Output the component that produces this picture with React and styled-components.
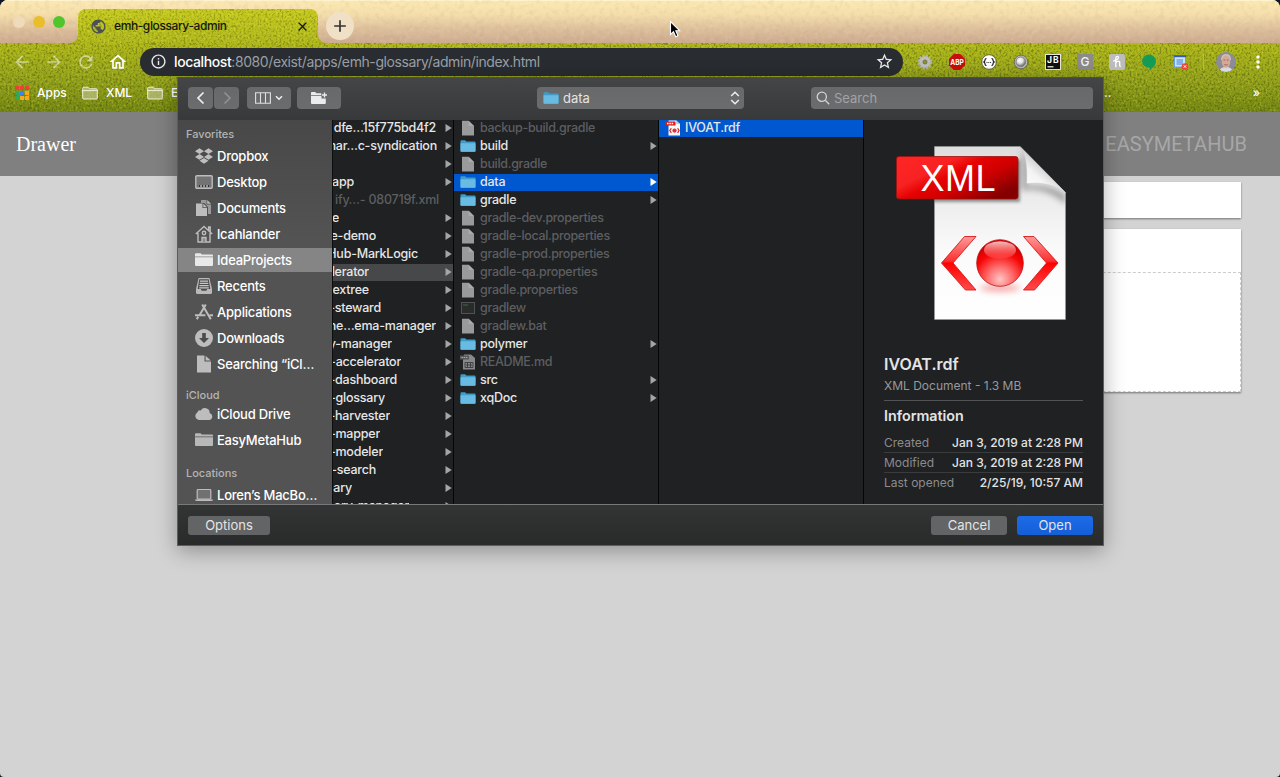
import React from "react";
import styled, { createGlobalStyle, css } from "styled-components";
import {
  MdPublic, MdClose, MdAdd, MdArrowBack, MdArrowForward, MdRefresh, MdOutlineHome,
  MdInfoOutline, MdStarBorder, MdMoreVert,
} from "react-icons/md";
import { FaDropbox } from "react-icons/fa";

const Global = createGlobalStyle`
  * { box-sizing: border-box; }
  body { margin: 0; background: #0d1526; overflow: hidden; }
  svg { display: block; flex: none; }
`;

const ui = `"Inter", "Liberation Sans", sans-serif`;

const Window = styled.div`
  position: relative;
  width: 1280px;
  height: 777px;
  border-radius: 8px 8px 4px 4px;
  overflow: hidden;
  background: #d3d3d3;
  font-family: ${ui};
`;

/* ---------- textured theme ---------- */
const GrainSvg = styled.svg`
  position: absolute;
  inset: 0;
  width: 100%;
  height: 100%;
  pointer-events: none;
`;

function Grain({ id, freq, dark, light, darkColor = "#3a4400", lightColor = "#e6ea48" }) {
  return (
    <GrainSvg aria-hidden="true">
      <filter id={id + "d"} x="0" y="0" width="100%" height="100%">
        <feTurbulence type="fractalNoise" baseFrequency={freq} numOctaves="2" seed="4" />
        <feColorMatrix values="0 0 0 0 0  0 0 0 0 0  0 0 0 0 0  4 0 0 0 -1.9" result="n" />
        <feFlood floodColor={darkColor} />
        <feComposite in2="n" operator="in" />
      </filter>
      <filter id={id + "l"} x="0" y="0" width="100%" height="100%">
        <feTurbulence type="fractalNoise" baseFrequency={freq} numOctaves="2" seed="11" />
        <feColorMatrix values="0 0 0 0 0  0 0 0 0 0  0 0 0 0 0  0 4 0 0 -2" result="n" />
        <feFlood floodColor={lightColor} />
        <feComposite in2="n" operator="in" />
      </filter>
      <rect width="100%" height="100%" filter={`url(#${id}d)`} opacity={dark} />
      <rect width="100%" height="100%" filter={`url(#${id}l)`} opacity={light} />
    </GrainSvg>
  );
}

const TabStrip = styled.div`
  position: relative;
  display: flex;
  height: 43px;
  padding-left: 13px;
  background: linear-gradient(#fbe9b3 0, #f5dfac 14px, #ddc09c 29px, #ccab90 43px);
  box-shadow: inset 0 1px 0 #fff3d0;
`;
const Lights = styled.div`
  display: flex;
  gap: 8px;
  width: 65px;
  padding-top: 16px;
  z-index: 1;
`;
const Light = styled.i`
  width: 12px;
  height: 12px;
  border-radius: 50%;
  background: ${(p) => p.$c};
`;
const Tab = styled.div`
  position: relative;
  display: flex;
  align-items: center;
  width: 240px;
  height: 34px;
  margin-top: 9px;
  padding: 0 8px 0 12px;
  border-radius: 8px 8px 0 0;
  background: linear-gradient(#c8cb20, #b0b81c);
  font-size: 12px;
  color: #15170a;
  &::before, &::after {
    content: "";
    position: absolute;
    bottom: 0;
    width: 8px;
    height: 8px;
  }
  &::before { left: -8px; background: radial-gradient(circle at 0 0, transparent 7.5px, #a9b01c 8px); }
  &::after { right: -8px; background: radial-gradient(circle at 100% 0, transparent 7.5px, #a9b01c 8px); }
`;
const TabClip = styled.div`
  position: absolute;
  inset: 0;
  border-radius: 8px 8px 0 0;
  overflow: hidden;
`;
const TabTitle = styled.span`
  position: relative;
  flex: 1;
  margin: 0 0 1px 7px;
  font-weight: 450;
  letter-spacing: -0.4px;
`;
const Above = styled.span`
  position: relative;
  display: flex;
`;
const NewTab = styled.div`
  position: relative;
  display: flex;
  align-items: center;
  justify-content: center;
  width: 28px;
  height: 28px;
  margin: 12px 0 0 8px;
  border-radius: 50%;
  background: #f0e0c6;
  color: #333;
`;

const Chrome = styled.div`
  position: relative;
  height: 69px;
  background: linear-gradient(#b0b81a, #92a11c 38px, #748713 69px);
`;
const ToolRow = styled.div`
  position: relative;
  display: flex;
  align-items: center;
  height: 37px;
  padding-left: 12px;
  color: #fff;
`;
const NavIcons = styled.div`
  display: flex;
  gap: 12px;
  width: 128px;
  & > svg:nth-child(-n + 3) { opacity: 0.5; }
`;
const Omnibox = styled.div`
  display: flex;
  align-items: center;
  width: 763px;
  height: 28px;
  padding: 0 9px 0 10px;
  border-radius: 14px;
  background: #292c30;
  color: #e8eaed;
  font-size: 14px;
`;
const Url = styled.span`
  flex: 1;
  margin-left: 7px;
  padding-bottom: 1px;
  color: #9aa0a6;
  letter-spacing: -0.4px;
  b { font-weight: 500; color: #fff; }
`;
const Extensions = styled.div`
  display: flex;
  align-items: center;
  gap: 12px;
  margin-left: 12px;
  & > svg { width: 20px; height: 20px; }
`;
const Divider = styled.div`
  width: 1px;
  height: 16px;
  margin: 0 12px 0 12px;
  background: #b3b95c;
`;
const BookmarkRow = styled.div`
  position: relative;
  display: flex;
  align-items: center;
  height: 26px;
  padding: 0 20px 1px 15px;
  color: #fff;
  font-size: 12px;
  font-weight: 450;
`;
const Bookmark = styled.div`
  display: flex;
  align-items: center;
  gap: 8px;
  width: ${(p) => p.$w}px;
`;
const Spread = styled.span`
  flex: 1;
`;
const AppGrid = styled.div`
  display: grid;
  grid-template-columns: repeat(3, 4px);
  gap: 1px;
  i { height: 4px; }
`;
const GridDot = styled.i`
  background: ${(p) => p.$c};
`;

/* ---------- page behind the dialog ---------- */
const PageHeader = styled.div`
  display: flex;
  align-items: center;
  justify-content: space-between;
  height: 64px;
  padding: 0 33px 0 16px;
  background: #808080;
`;
const DrawerTitle = styled.span`
  font: 20px "Liberation Serif", serif;
  color: #fff;
`;
const Brand = styled.span`
  font: 20px Roboto, sans-serif;
  letter-spacing: 0.05px;
  color: #a7a7a7;
`;
const Cards = styled.div`
  display: flex;
  flex-direction: column;
  gap: 11px;
  padding: 6px 39px 0 216px;
`;
const Card = styled.div`
  height: ${(p) => p.$h}px;
  background: #fff;
  box-shadow: 0 1px 2px rgba(0, 0, 0, 0.45);
  ${(p) => p.$dashed && css`
    padding-top: 43px;
    div { height: 120px; border: 1px dashed #ccc; border-left: 0; }
  `}
`;

/* ---------- file dialog ---------- */
const Dialog = styled.div`
  position: absolute;
  left: 177px;
  top: 77px;
  width: 927px;
  height: 469px;
  border: 1px solid #5b5d5f;
  border-top-color: #4b4d4f;
  background: #1f2123;
  color: #e4e4e4;
  font-size: 13px;
  box-shadow: 0 5px 20px rgba(0, 0, 0, 0.32);
`;
const Toolbar = styled.div`
  display: flex;
  height: 42px;
  padding: 9px 10px 0;
  background: linear-gradient(#434547, #37393b);
`;
const ToolButton = styled.div`
  display: flex;
  align-items: center;
  justify-content: center;
  gap: 4px;
  width: ${(p) => p.$w}px;
  height: 22px;
  margin-right: ${(p) => p.$gap || 1}px;
  border-radius: 4px;
  background: linear-gradient(#67696b, #6b6c6e);
`;
const Popup = styled(ToolButton)`
  justify-content: flex-start;
  gap: 4px;
  padding: 0 4px 0 6px;
  margin: 0 67px 0 195px;
  span { flex: 1; }
`;
const Search = styled(ToolButton)`
  justify-content: flex-start;
  padding-left: 5px;
  margin: 0;
  color: #a2a3a4;
`;
const Body = styled.div`
  display: flex;
  height: 384px;
  overflow: hidden;
`;
const Sidebar = styled.div`
  display: flex;
  flex-direction: column;
  width: 154px;
  background: linear-gradient(#484848, #535353 120px, #535353);
  overflow: hidden;
  font-weight: 500;
  color: #fff;
`;
const Section = styled.div`
  padding: ${(p) => p.$top}px 0 ${(p) => p.$bottom}px 8px;
  font-size: 11px;
  line-height: 12px;
  color: #b4b4b4;
`;
const Place = styled.div`
  display: flex;
  flex: none;
  align-items: center;
  gap: 4px;
  height: 24px;
  margin: 1px 0;
  padding-left: 17px;
  white-space: nowrap;
  letter-spacing: -0.22px;
  background: ${(p) => (p.$on ? "#858585" : "transparent")};
`;
const Column = styled.div`
  width: ${(p) => p.$w}px;
  border-right: 1px solid #050607;
  border-left: ${(p) => (p.$first ? "1px solid #0c0d0e" : "0")};
  overflow: hidden;
`;
const Row = styled.div`
  display: flex;
  align-items: center;
  height: 17px;
  margin-bottom: 1px;
  padding: 0 1px 1px ${(p) => (p.$pad === undefined ? 6 : p.$pad)}px;
  background: ${(p) => p.$bg || "transparent"};
  color: ${(p) => (p.$dim ? "#5d5e60" : "#e6e6e6")};
  font-weight: ${(p) => (p.$strong ? 500 : 450)};
  font-size: 12.5px;
  letter-spacing: ${(p) => (p.$strong ? "-0.25px" : "-0.32px")};
  white-space: nowrap;
  & > span { margin-left: 4px; line-height: 16px; padding-bottom: 1px; }
  & > svg:last-child { margin-left: auto; }
`;
const Clipped = styled.div`
  display: flex;
  justify-content: flex-end;
  width: ${(p) => p.$w}px;
  overflow: hidden;
  line-height: 16px;
  letter-spacing: -0.22px;
`;
const Preview = styled.div`
  flex: 1;
  padding: 18px 20px 0;
`;
const Art = styled.svg`
  width: 199px;
  height: 190px;
`;
const FileName = styled.div`
  margin-top: 26px;
  padding-bottom: 1px;
  font-size: 16px;
  font-weight: 600;
  line-height: 20px;
`;
const Kind = styled.div`
  padding: 3px 0 6px;
  border-bottom: 1px solid #515355;
  font-size: 12px;
  line-height: 16px;
  color: #98999b;
`;
const InfoTitle = styled.div`
  padding: 5px 0 7px;
  font-size: 14.3px;
  font-weight: 600;
  line-height: 20px;
`;
const Info = styled.div`
  display: flex;
  justify-content: space-between;
  height: 20px;
  font-size: 12px;
  font-weight: 450;
  line-height: 19px;
  border-bottom: 1px solid ${(p) => (p.$last ? "transparent" : "#3a3b3d")};
  span { color: #8b8c8e; font-weight: 400; }
`;
const Footer = styled.div`
  display: flex;
  gap: 10px;
  height: 41px;
  padding: 11px 10px 0;
  border-top: 1px solid #77797b;
  background: linear-gradient(#333434, #292a2a);
`;
const Button = styled.div`
  width: ${(p) => p.$w}px;
  height: 19px;
  border-radius: 3px;
  background: ${(p) => (p.$primary ? "linear-gradient(#1c6be8, #155fd6)" : "#636465")};
  text-align: center;
  line-height: 19px;
  ${(p) => p.$push && css`margin-right: auto;`}
`;
const Cursor = styled.svg`
  position: absolute;
  left: 669px;
  top: 20px;
`;

/* ---------- drawings ---------- */
const BlueFolder = () => (
  <svg width="16" height="14" viewBox="0 0 16 14">
    <path d="M.5 2.200q0-.9.9-.9h3.800l1.100 1.200h8.300q.9 0 .9.9V12q0 .8-.8.8H1.300q-.8 0-.8-.8z" fill="#3f9cc9" />
    <path d="M.5 4.200h15V12q0 .8-.8.8H1.300q-.8 0-.8-.8z" fill="#68bbe3" />
  </svg>
);
const GreyFolder = ({ c = "#b8b8b8" }) => (
  <svg width="18" height="16" viewBox="0 0 18 16">
    <path d="M0 2.300q0-1 1-1h4.600l1.200 1.300H17q1 0 1 1v.9H0z" fill={c} />
    <path d="M0 5.200h18V13q0 1-1 1H1q-1 0-1-1z" fill={c} />
  </svg>
);
const Page = () => (
  <svg width="16" height="16" viewBox="0 0 16 16">
    <path d="M2 .8h6.600L14 6v9.500H2z" fill="#999a9b" />
    <path d="M8.600.8V6H14z" fill="#aaabac" />
  </svg>
);
const Exec = () => (
  <svg width="16" height="16" viewBox="0 0 16 16">
    <rect x="1.500" y="2.500" width="13" height="11" fill="#292c2a" stroke="#4f5351" />
    <path d="M3 5h5" stroke="#3f6a45" />
  </svg>
);
const MdIcon = () => (
  <svg width="16" height="16" viewBox="0 0 16 16">
    <path d="M4 .5h7L15 4v11.500H3V6" fill="#88898a" />
    <path d="M0 1.500h9v4H0z" fill="#58595a" /><path d="M1.500 3.500h6" stroke="#aaa" strokeDasharray="1.500 .7" />
    <path d="M5 8.500h8v5H5zM7.500 9v4M10.500 9v4M6 11h6" fill="none" stroke="#414243" />
  </svg>
);
const SmallXml = () => (
  <svg width="16" height="16" viewBox="0 0 16 16">
    <path d="M3.500.5h7.800L15 4v11.500H3.500z" fill="#f6f6f6" />
    <path d="M11 .5V4h4z" fill="#c7cbd2" />
    <rect y="1.500" width="10.500" height="4" rx=".5" fill="#d81a1a" />
    <path d="M2 3.500h6.500" stroke="#fff" strokeWidth="1.400" strokeDasharray="1.600 .7" />
    <path d="M6.300 8.200 4.800 10.600l1.500 2.400M12.600 8.200l1.500 2.400-1.500 2.400" fill="none" stroke="#e02020" strokeWidth="1.200" />
    <circle cx="9.500" cy="10.600" r="2.100" fill="#e43030" />
  </svg>
);
const Arrow = ({ c = "#a4a5a6" }) => (
  <svg width="7" height="8" viewBox="0 0 7 8"><path d="M.5 0 6.700 4 .5 8z" fill={c} /></svg>
);
const BookmarkFolder = () => (
  <svg width="16" height="14" viewBox="0 0 16 14" fill="#b9bd7c" fillOpacity=".75" stroke="#eef0d8">
    <path d="M.7 2.200q0-1 1-1H6l1.300 1.600h7q1 0 1 1V12q0 1-1 1H1.700q-1 0-1-1z" /><path d="M.7 4.600h14.600" />
  </svg>
);

const placeIcons = {
  dropbox: <FaDropbox size={18} color="#bebebe" />,
  desktop: (
    <svg width="18" height="16" viewBox="0 0 18 16">
      <rect x=".8" y="1.800" width="16.400" height="12.400" rx="1" fill="#737373" stroke="#bdbdbd" strokeWidth="1.400" />
      <path d="M4 12h10" stroke="#333" strokeWidth="2" /><path d="M5.200 12h8" stroke="#d0d0d0" strokeWidth="1.500" strokeDasharray="1.700 1.300" />
    </svg>
  ),
  documents: (
    <svg width="18" height="18" viewBox="0 0 18 18">
      <path d="M6 1h5.500v4.500H16V15h-3V8L9.500 4H6z" fill="#9a9a9a" /><path d="M12.200 1 16 4.800h-3.800z" fill="#bbb" />
      <path d="M1 4.500h6.500V9H12v8H1z" fill="#bdbdbd" /><path d="M8.300 4.500 12 8.200H8.300z" fill="#bdbdbd" />
    </svg>
  ),
  home: (
    <svg width="18" height="18" viewBox="0 0 18 18" fill="none" stroke="#bdbdbd" strokeWidth="1.400">
      <path d="M.8 9 9 1.500 17.200 9M3 8v9h12V8M13.600 5.500V2h1.600v5" /><path d="M7 17v-4.500h4V17" fill="#8c8c8c" /><circle cx="9" cy="8" r="1.700" />
    </svg>
  ),
  folder: <GreyFolder />,
  folderOn: <GreyFolder c="#e9e9e9" />,
  recents: (
    <svg width="18" height="18" viewBox="0 0 18 18">
      <path d="M3.600 1h10.800l2.600 11v3.800q0 1.200-1.200 1.200H2.200Q1 17 1 15.800V12z" fill="#b9b9b9" />
      <path d="M4.300 2.300h9.400l1.600 9.700h-3l-1 1.800H6.700L5.700 12h-3z" fill="#4d4d4d" />
      <path d="M5 4.200h8M4.700 6.400h8.600M4.400 8.600h9.200M4.200 10.800h9.600" stroke="#c7c7c7" strokeWidth="1.200" />
    </svg>
  ),
  apps: (
    <svg width="18" height="18" viewBox="0 0 18 18" fill="none" stroke="#bdbdbd" strokeWidth="2">
      <path d="M10.800 1.500 4.800 11.800M7.200 1.500l8.600 14.800M0 12.200h10.400M14.600 12.200H18M3.200 13.800l-1.400 2.500" />
    </svg>
  ),
  downloads: (
    <svg width="18" height="18" viewBox="0 0 18 18">
      <circle cx="9" cy="9" r="9" fill="#bdbdbd" /><path d="M7.200 4h3.600v5H14l-5 5-5-5h3.200z" fill="#4c4c4c" />
    </svg>
  ),
  doc: (
    <svg width="18" height="18" viewBox="0 0 18 18">
      <path d="M2 .5h7.500v6H16v11H2z" fill="#bdbdbd" /><path d="M10.600.8 15.800 5.600h-5.200z" fill="#bdbdbd" />
    </svg>
  ),
  cloud: (
    <svg width="18" height="14" viewBox="0 0 18 14">
      <path d="M4 13a4 4 0 0 1-1.700-7.400 3 3 0 0 1 3.500-2.200A4.700 4.700 0 0 1 14.600 6 3.600 3.600 0 0 1 14.500 13z" fill="#bdbdbd" />
    </svg>
  ),
  laptop: (
    <svg width="18" height="14" viewBox="0 0 18 14">
      <rect x="2.200" y="1.500" width="13.600" height="9.600" rx=".8" fill="#717171" stroke="#bdbdbd" strokeWidth="1.200" />
      <path d="M0 11.500h18v.6q-.5.900-1.500.900h-15q-1 0-1.500-.9z" fill="#bdbdbd" />
    </svg>
  ),
};

const favorites = [
  ["dropbox", "Dropbox"], ["desktop", "Desktop"], ["documents", "Documents"], ["home", "lcahlander"],
  ["folderOn", "IdeaProjects", true], ["recents", "Recents"], ["apps", "Applications"],
  ["downloads", "Downloads"], ["doc", "Searching “iCl…"],
];

/* label and the x offset at which it ends; the column is scrolled sideways */
const projects = [
  ["dfe…15f775bd4f2", 103], ["mar…c-syndication", 104], ["", 20], ["app", 21],
  ["ify…- 080719f.xml", 106, "dim"], ["e", 6], ["e-demo", 43], ["Hub-MarkLogic", 85],
  ["lerator", 36, "on"], ["extree", 36], ["-steward", 48], ["he…ema-manager", 103],
  ["y-manager", 59], ["-accelerator", 68], ["-dashboard", 64], ["-glossary", 52],
  ["-harvester", 57], ["-mapper", 47], ["-modeler", 50], ["-search", 43], ["sary", 19],
  ["ery-manager", 76],
];

const files = [
  ["page", "backup-build.gradle"], ["folder", "build"], ["page", "build.gradle"], ["folder", "data", true],
  ["folder", "gradle"], ["page", "gradle-dev.properties"], ["page", "gradle-local.properties"],
  ["page", "gradle-prod.properties"], ["page", "gradle-qa.properties"], ["page", "gradle.properties"],
  ["exec", "gradlew"], ["page", "gradlew.bat"], ["folder", "polymer"], ["md", "README.md"],
  ["folder", "src"], ["folder", "xqDoc"],
];
const fileIcons = { page: <Page />, folder: <BlueFolder />, exec: <Exec />, md: <MdIcon /> };
const dots = ["#ea4335", "#ea4335", "#ea4335", "#34a853", "#3f83ee", "#fba71a", "#34a853", "#fba71a", "#fba71a"];

function Places({ items }) {
  return items.map(([icon, label, on]) => (
    <Place key={label} $on={on}>{placeIcons[icon]}{label}</Place>
  ));
}

function ExtensionIcons() {
  return (
    <Extensions>
      <svg viewBox="0 0 20 20">
        <circle cx="10" cy="10" r="6.300" fill="none" stroke="#b4b4b4" strokeWidth="2" strokeDasharray="1.900 1.400" />
        <circle cx="10" cy="10" r="4" fill="none" stroke="#bebebe" strokeWidth="3.400" />
        <circle cx="10" cy="10" r="2" fill="#8f9420" stroke="#6f6f6f" strokeWidth=".8" />
      </svg>
      <svg viewBox="0 0 20 20">
        <path d="M6.700 2h6.600L18 6.700v6.600L13.300 18H6.700L2 13.300V6.700z" fill="#c80d0d" />
        <text x="3.200" y="12.900" fontSize="7.500" fontWeight="700" fill="#fff" textLength="13.600" lengthAdjust="spacingAndGlyphs">ABP</text>
      </svg>
      <svg viewBox="0 0 20 20">
        <circle cx="10" cy="10" r="7.300" fill="#fff" stroke="#4c4c2c" strokeWidth=".8" />
        <path d="M7.500 6.500q-1.500 0-1.500 1.500t-1.200 2Q6 10.500 6 12t1.500 1.500M12.500 6.500Q14 6.500 14 8t1.200 2Q14 10.500 14 12t-1.500 1.500" fill="none" stroke="#111" strokeWidth="1.200" />
        <path d="M7.500 10.500h5" stroke="#333" strokeDasharray="1 .8" />
      </svg>
      <svg viewBox="0 0 20 20">
        <radialGradient id="orb" cx=".4" cy=".35" r=".6"><stop offset="0" stopColor="#fff" /><stop offset=".5" stopColor="#e3e3e3" /><stop offset="1" stopColor="#777" /></radialGradient>
        <circle cx="10" cy="10" r="6.800" fill="#b9b9b9" stroke="#555" strokeWidth=".7" /><circle cx="9.800" cy="9.800" r="4.800" fill="url(#orb)" stroke="#777" strokeWidth=".8" />
      </svg>
      <svg viewBox="0 0 20 20">
        <rect x="2.500" y="2.500" width="15" height="15" fill="#111" stroke="#e8e8e0" />
        <text x="4" y="10.600" fontSize="8.500" fontWeight="700" fill="#fff" textLength="11.500">JB</text><path d="M4.500 14.800h6" stroke="#fff" strokeWidth="1.200" />
      </svg>
      <svg viewBox="0 0 20 20">
        <rect x="2" y="2" width="16" height="16" fill="#8b8b8b" />
        <text x="10" y="14.200" fontSize="12" fontWeight="500" textAnchor="middle" fill="#f4f4f4">G</text>
      </svg>
      <svg viewBox="0 0 20 20">
        <rect x="2" y="2" width="16" height="16" rx="2" fill="#bcbcbc" />
        <path d="M8.800 15.200V6.300q0-1.900 1.500-1.900 1.200 0 1.200 1.200 0 1.800-5.300 3.600M8.800 11q1-1.800 2.500-1.800 1.600 0 1.400 2.100v2q0 1.300 1.100 1" fill="none" stroke="#fff" strokeWidth="1.300" />
      </svg>
      <svg viewBox="0 0 20 20">
        <path d="M10 2.600a6.900 6.600 0 0 1 6.900 6.600c0 4-3 6.700-6.200 8.800v-2.200H10A6.900 6.600 0 1 1 10 2.600z" fill="#149c57" />
      </svg>
      <svg viewBox="0 0 20 20">
        <rect x="3.500" y="4" width="11" height="11" fill="#cfe0f8" stroke="#6d9fe0" /><path d="M3 4.200h12" stroke="#2c5fb2" strokeWidth="2" />
        <rect x="5.500" y="7" width="6.500" height="6" fill="#7fb2ee" />
        <circle cx="14" cy="14.500" r="3.300" fill="#ee4438" /><path d="m12.800 13.300 2.400 2.400m0-2.400-2.400 2.400" stroke="#fff" />
      </svg>
    </Extensions>
  );
}

function Avatar() {
  return (
    <svg width="20" height="20" viewBox="0 0 20 20">
      <clipPath id="av"><circle cx="10" cy="10" r="10" /></clipPath>
      <g clipPath="url(#av)">
        <rect width="20" height="20" fill="#8b8c98" /><path d="M3 20q1-5 7-5t7 5z" fill="#d9dbe4" />
        <path d="M5 8q0-6 5-6t5 6z" fill="#c9c4c0" /><ellipse cx="10" cy="9.500" rx="4.300" ry="6.200" fill="#d5a794" />
        <path d="M7.500 8h1.800M10.800 8h1.800M8.300 12.600q1.700 1 3.400 0" stroke="#8a5a4c" strokeWidth=".8" fill="none" />
      </g>
    </svg>
  );
}

function DocumentArt() {
  return (
    <Art viewBox="884 138 199 190">
      <defs>
        <linearGradient id="paper" x1="0" y1="0" x2="0" y2="1"><stop offset="0" stopColor="#dedede" /><stop offset=".6" stopColor="#fafafa" /><stop offset="1" stopColor="#fff" /></linearGradient>
        <linearGradient id="label" x1="0" y1="0" x2="1" y2=".7"><stop offset="0" stopColor="#ff2525" /><stop offset=".35" stopColor="#f82222" /><stop offset=".5" stopColor="#e60202" /><stop offset=".72" stopColor="#cc0000" /><stop offset="1" stopColor="#840000" /></linearGradient>
        <linearGradient id="curl" x1="0" y1="1" x2=".6" y2=".3"><stop offset="0" stopColor="#fff" /><stop offset=".55" stopColor="#f4f4f4" /><stop offset="1" stopColor="#b9b9b9" /></linearGradient>
        <linearGradient id="angle" x1="0" y1="0" x2="0" y2="1"><stop offset="0" stopColor="#ff9a9a" /><stop offset=".46" stopColor="#f93030" /><stop offset=".5" stopColor="#f00" /><stop offset="1" stopColor="#ff4b4b" /></linearGradient>
        <radialGradient id="ball" cx=".5" cy=".85" r=".75"><stop offset="0" stopColor="#ffc4c4" /><stop offset=".35" stopColor="#ff7070" /><stop offset=".75" stopColor="#f70606" /><stop offset="1" stopColor="#d40000" /></radialGradient>
        <linearGradient id="shine" x1="0" y1="0" x2="0" y2="1"><stop offset="0" stopColor="#ffe0e0" stopOpacity=".85" /><stop offset="1" stopColor="#ff5050" stopOpacity=".4" /></linearGradient>
        <filter id="soft" x="-30%" y="-100%" width="160%" height="300%"><feGaussianBlur stdDeviation="3" /></filter>
        <filter id="soft2" x="-20%" y="-20%" width="150%" height="150%"><feGaussianBlur stdDeviation="1.500" /></filter>
        <clipPath id="sheet"><path d="M934.500 146.500H1020L1065.500 192.500V319.500H934.500z" /></clipPath>
      </defs>
      <path d="M934.500 146.500H1020L1065.500 192.500V319.500H934.500z" fill="url(#paper)" stroke="#9b9b9b" strokeWidth=".6" />
      <g clipPath="url(#sheet)">
        <path d="M1022 148Q1030 165 1026 186Q1050 183 1066 196V204Q1046 186 1022 190z" fill="#777" opacity=".75" filter="url(#soft)" />
        <rect x="899" y="160" width="121" height="42" fill="#333" opacity=".5" filter="url(#soft2)" />
      </g>
      <path d="M1020 146.500Q1028 156 1026.800 183.500Q1050 181 1065.500 192.500z" fill="url(#curl)" stroke="#c5c5c5" strokeWidth=".4" />
      <rect x="896.500" y="156.500" width="121.500" height="42.500" rx="2.500" fill="url(#label)" stroke="#9d1111" strokeWidth=".8" />
      <text x="920.500" y="190.500" fontFamily="Liberation Sans, sans-serif" fontSize="36" fill="#fff" textLength="75">XML</text>
      <ellipse cx="1000" cy="288" rx="20" ry="4" fill="#ef5050" opacity=".45" filter="url(#soft)" />
      <path d="M964.500 236.500H976L953 263l23 27H965.500L941.500 263z" fill="url(#angle)" stroke="#d81818" strokeWidth=".9" />
      <path d="M1034 236.500H1023.500L1046.500 263l-23 27H1034.500L1058 263z" fill="url(#angle)" stroke="#d81818" strokeWidth=".9" />
      <circle cx="1000" cy="263" r="23.300" fill="url(#ball)" stroke="#b91010" strokeWidth=".8" />
      <ellipse cx="1000" cy="250" rx="16" ry="8.800" fill="url(#shine)" />
    </Art>
  );
}

export default function App() {
  return (
    <Window>
      <Global />
      <TabStrip>
        <Grain id="sand" freq=".2" dark=".08" light=".1" darkColor="#a87c60" lightColor="#fff0c8" />
        <Lights><Light $c="#efdbb9" /><Light $c="#e9be2a" /><Light $c="#51c52e" /></Lights>
        <Tab>
          <TabClip><Grain id="tab" freq=".5 .42" dark=".3" light=".35" /></TabClip>
          <Above><MdPublic size={17} color="#4b5056" /></Above>
          <TabTitle>emh-glossary-admin</TabTitle>
          <Above><MdClose size={15} /></Above>
        </Tab>
        <NewTab><MdAdd size={20} /></NewTab>
      </TabStrip>
      <Chrome>
        <Grain id="grass" freq=".5 .42" dark=".4" light=".26" />
        <ToolRow>
          <NavIcons>
            <MdArrowBack size={20} /><MdArrowForward size={20} /><MdRefresh size={20} /><MdOutlineHome size={20} />
          </NavIcons>
          <Omnibox>
            <MdInfoOutline size={17} />
            <Url><b>localhost</b>:8080/exist/apps/emh-glossary/admin/index.html</Url>
            <MdStarBorder size={19} />
          </Omnibox>
          <ExtensionIcons />
          <Divider />
          <Avatar />
          <Spread />
          <MdMoreVert size={20} />
          <Spread />
        </ToolRow>
        <BookmarkRow>
          <Bookmark $w={67}><AppGrid>{dots.map((c, i) => <GridDot key={i} $c={c} />)}</AppGrid>Apps</Bookmark>
          <Bookmark $w={65}><BookmarkFolder />XML</Bookmark>
          <Bookmark $w={957}><BookmarkFolder />E</Bookmark>
          <Spread>..</Spread>
          <span>»</span>
        </BookmarkRow>
      </Chrome>
      <PageHeader><DrawerTitle>Drawer</DrawerTitle><Brand>EASYMETAHUB</Brand></PageHeader>
      <Cards>
        <Card $h={36} />
        <Card $h={163} $dashed><div /></Card>
      </Cards>

      <Dialog>
        <Toolbar>
          <ToolButton $w={25}><svg width="10" height="14" fill="none" stroke="#f0f0f0" strokeWidth="1.700"><path d="M7.500 1.500 2 7l5.500 5.500" /></svg></ToolButton>
          <ToolButton $w={25} $gap={8}><svg width="10" height="14" fill="none" stroke="#929394" strokeWidth="1.500"><path d="M2.500 1.500 8 7l-5.500 5.500" /></svg></ToolButton>
          <ToolButton $w={44} $gap={6}>
            <svg width="16" height="12" fill="none" stroke="#e0e0e0" strokeWidth="1.100"><path d="M.6.8h14.800v10.400H.6zM5.500.8v10.400M10.500.8v10.400" /></svg>
            <svg width="8" height="6" fill="none" stroke="#eee" strokeWidth="1.600"><path d="M1 1.200 4 4.200 7 1.200" /></svg>
          </ToolButton>
          <ToolButton $w={44}>
            <svg width="18" height="14" viewBox="0 0 18 14"><path d="M1 1.800q0-.8.8-.8h3.500l1 1.200h5V4H1zM1 4.700h10.500v2.800h4.300V12q0 1-1 1H2q-1 0-1-1z" fill="#ececec" /><path d="M14.500 1.500v5M12 4h5" stroke="#ececec" strokeWidth="1.300" /></svg>
          </ToolButton>
          <Popup $w={207}>
            <BlueFolder /><span>data</span>
            <svg width="10" height="14" fill="none" stroke="#eee" strokeWidth="1.500"><path d="M1.200 5 5 1.300 8.800 5M1.200 9 5 12.700 8.800 9" /></svg>
          </Popup>
          <Search $w={282}>
            <svg width="14" height="14" fill="none" stroke="#d2d2d2" strokeWidth="1.300"><circle cx="5.800" cy="5.800" r="4.600" /><path d="m9.200 9.200 4 4" /></svg>
            Search
          </Search>
        </Toolbar>
        <Body>
          <Sidebar>
            <Section $top={8} $bottom={3}>Favorites</Section>
            <Places items={favorites} />
            <Section $top={12} $bottom={0}>iCloud</Section>
            <Places items={[["cloud", "iCloud Drive"], ["folder", "EasyMetaHub"]]} />
            <Section $top={14} $bottom={3}>Locations</Section>
            <Places items={[["laptop", "Loren’s MacBo…"]]} />
          </Sidebar>
          <Column $w={122} $first>
            {projects.map(([label, end, mode], i) => (
              <Row key={i} $pad={0} $dim={mode === "dim"} $bg={mode === "on" ? "#474849" : undefined}>
                <Clipped $w={end}>{label}</Clipped>
                {mode !== "dim" && <Arrow />}
              </Row>
            ))}
          </Column>
          <Column $w={205}>
            {files.map(([icon, label, on]) => {
              const dir = icon === "folder";
              return (
                <Row key={label} $dim={!dir} $strong={dir} $bg={on ? "#0058d0" : undefined}>
                  {fileIcons[icon]}<span>{label}</span>{dir && <Arrow c={on ? "#fff" : undefined} />}
                </Row>
              );
            })}
          </Column>
          <Column $w={205}>
            <Row $bg="#0058d0" $strong><SmallXml /><span>IVOAT.rdf</span></Row>
          </Column>
          <Preview>
            <DocumentArt />
            <FileName>IVOAT.rdf</FileName>
            <Kind>XML Document - 1.3 MB</Kind>
            <InfoTitle>Information</InfoTitle>
            <Info><span>Created</span>Jan 3, 2019 at 2:28 PM</Info>
            <Info><span>Modified</span>Jan 3, 2019 at 2:28 PM</Info>
            <Info $last><span>Last opened</span>2/25/19, 10:57 AM</Info>
          </Preview>
        </Body>
        <Footer>
          <Button $w={82} $push>Options</Button>
          <Button $w={76}>Cancel</Button>
          <Button $w={76} $primary>Open</Button>
        </Footer>
      </Dialog>
      <Cursor width="12" height="19" viewBox="0 0 12 19">
        <path d="M1.500 1.500v13l3-2.800 2.200 5 2.300-1-2.200-4.900h4z" fill="#000" stroke="#fff" strokeWidth="1.100" />
      </Cursor>
    </Window>
  );
}
